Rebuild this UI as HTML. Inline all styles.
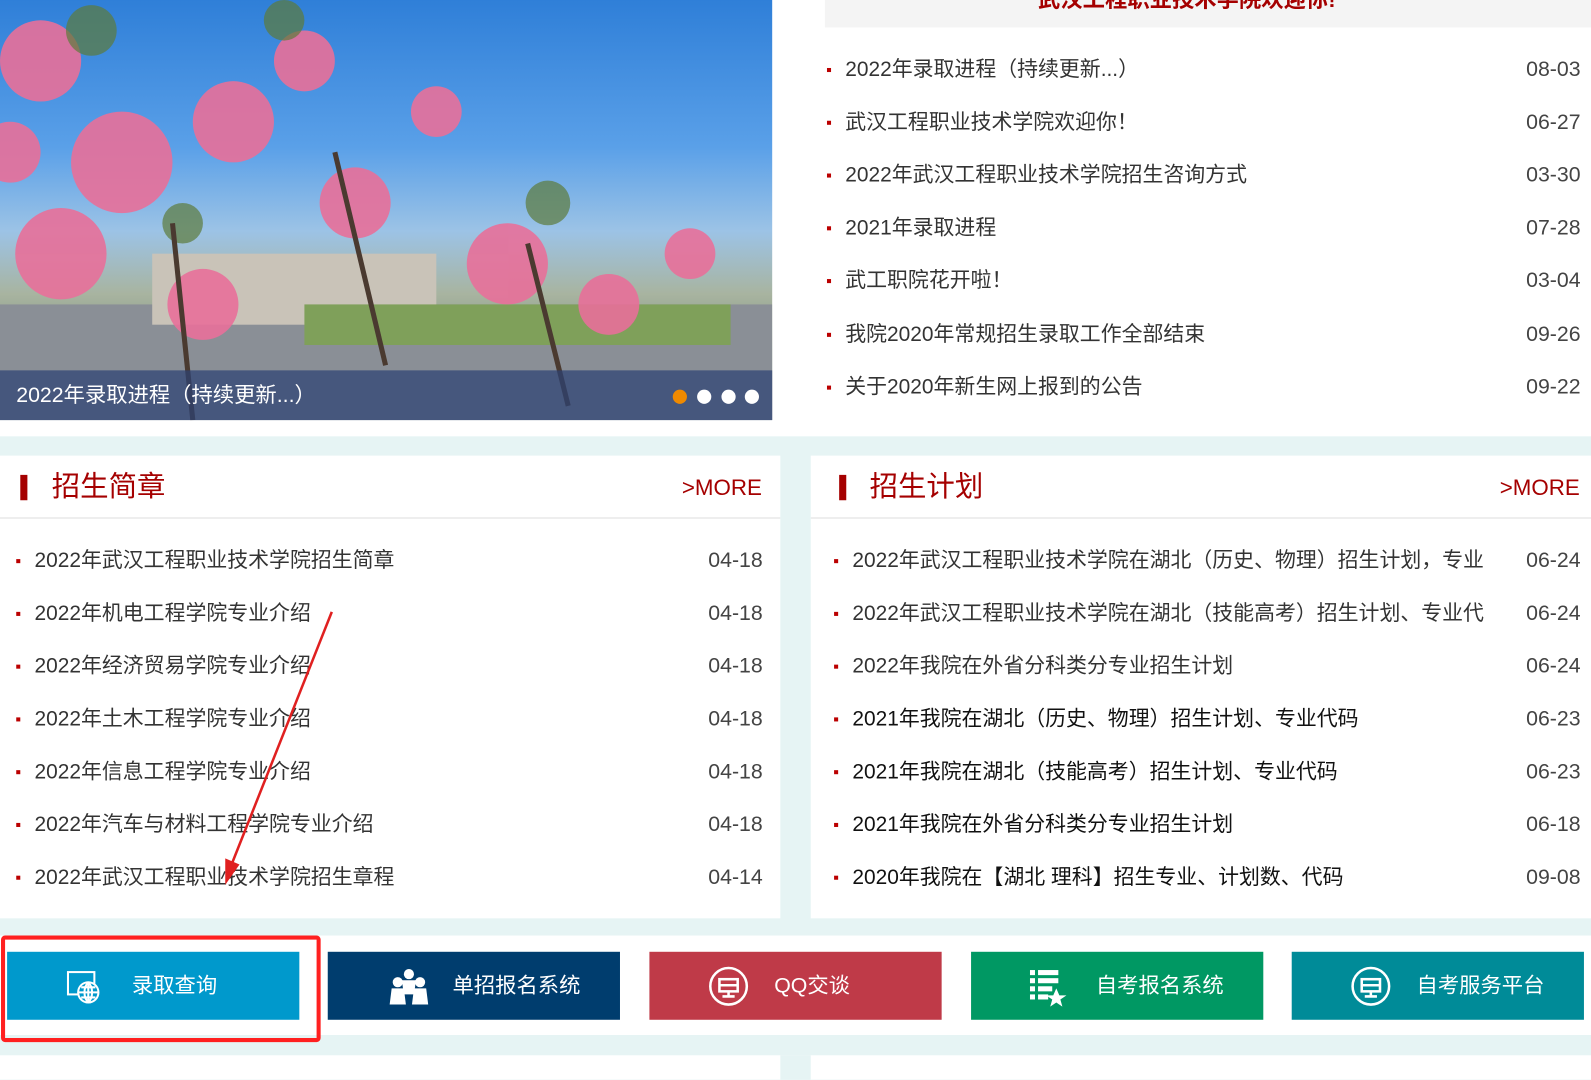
<!DOCTYPE html>
<html><head><meta charset="utf-8"><style>
*{margin:0;padding:0;box-sizing:border-box}
body{width:1591px;height:1064px;overflow:hidden;background:#e6f4f4;font-family:"Liberation Sans","Noto Sans CJK SC",sans-serif;position:relative}
#w{position:absolute;left:0;top:0;width:1568px;height:1049px;transform:scale(1.0147);transform-origin:0 0}
.abs{position:absolute}
.top{left:0;top:0;width:1591px;height:430px;background:#fff}
.img{left:0;top:0;width:761px;height:414px;overflow:hidden;background:linear-gradient(180deg,#2f7fd8 0%,#5aa0e8 35%,#9cc3e6 55%,#a8b4a0 70%,#7f8f80 85%,#8d96a2 100%)}
.cap{left:0;top:365px;width:761px;height:49px;background:rgba(45,65,115,.72);color:#fff;font-size:21px;line-height:49px;padding-left:16px}
.dot{top:384px;width:14px;height:14px;border-radius:50%;background:#fff}
.row{position:absolute;font-size:20.6px;color:#333;height:30px;line-height:30px;white-space:nowrap}
.row:before{content:"";position:absolute;left:-18px;top:13px;width:4px;height:4px;background:#b00}
.date{position:absolute;font-size:21px;color:#444;line-height:30px}
.panel{background:#fff;top:449px;height:456px}
.hd{position:absolute;left:0;right:0;top:0;height:62px;border-bottom:1px solid #ddd}
.bar{position:absolute;left:20px;top:19px;width:7px;height:25px;background:#a50000}
.ttl{position:absolute;left:51px;top:12px;font-size:28px;color:#a50000;line-height:38px}
.more{position:absolute;top:18px;font-size:22px;color:#a50000;line-height:28px}
.strip{left:0;top:922px;width:1591px;height:98px;background:#fff}
.btn{top:938px;width:288px;height:67px;color:#fff;font-size:21px;line-height:67px}
.btn span{position:absolute;left:123px}
.btn svg{position:absolute;left:58px;top:16px}
</style></head><body><div id="w">
<div class="abs top"></div>
<div class="abs img">
<svg width="761" height="414" class="abs" style="left:0;top:0">
<rect x="0" y="300" width="761" height="114" fill="#8a8f96"/>
<rect x="150" y="250" width="280" height="70" fill="#c9c3b8"/>
<rect x="300" y="300" width="420" height="40" fill="#7fa05a"/>
<g fill="#e8709a" opacity=".9">
<circle cx="40" cy="60" r="40"/><circle cx="120" cy="160" r="50"/><circle cx="60" cy="250" r="45"/><circle cx="230" cy="120" r="40"/><circle cx="300" cy="60" r="30"/><circle cx="350" cy="200" r="35"/><circle cx="200" cy="300" r="35"/><circle cx="430" cy="110" r="25"/><circle cx="500" cy="260" r="40"/><circle cx="600" cy="300" r="30"/><circle cx="680" cy="250" r="25"/><circle cx="10" cy="150" r="30"/>
</g>
<g fill="#5c7a3a" opacity=".7"><circle cx="90" cy="30" r="25"/><circle cx="280" cy="20" r="20"/><circle cx="180" cy="220" r="20"/><circle cx="540" cy="200" r="22"/></g>
<g stroke="#4a3a30" stroke-width="5"><line x1="190" y1="414" x2="170" y2="220"/><line x1="380" y1="360" x2="330" y2="150"/><line x1="560" y1="400" x2="520" y2="240"/></g>
</svg>
</div>
<div class="abs cap">2022年录取进程（持续更新...）</div>
<div class="abs dot" style="left:663px;background:#f08a00"></div>
<div class="abs dot" style="left:687px"></div>
<div class="abs dot" style="left:711px"></div>
<div class="abs dot" style="left:734px"></div>

<div class="abs" style="left:813px;top:0;width:755px;height:27px;background:#f4f4f4;overflow:hidden"><div style="position:absolute;left:210px;top:-18px;font-size:22px;font-weight:bold;color:#a50000">武汉工程职业技术学院欢迎你!</div></div>

<div class="row" style="left:833px;top:54px">2022年录取进程（持续更新...）</div><div class="date" style="left:1504px;top:54px">08-03</div>
<div class="row" style="left:833px;top:106px">武汉工程职业技术学院欢迎你！</div><div class="date" style="left:1504px;top:106px">06-27</div>
<div class="row" style="left:833px;top:158px">2022年武汉工程职业技术学院招生咨询方式</div><div class="date" style="left:1504px;top:158px">03-30</div>
<div class="row" style="left:833px;top:210px">2021年录取进程</div><div class="date" style="left:1504px;top:210px">07-28</div>
<div class="row" style="left:833px;top:262px">武工职院花开啦！</div><div class="date" style="left:1504px;top:262px">03-04</div>
<div class="row" style="left:833px;top:315px">我院2020年常规招生录取工作全部结束</div><div class="date" style="left:1504px;top:315px">09-26</div>
<div class="row" style="left:833px;top:367px">关于2020年新生网上报到的公告</div><div class="date" style="left:1504px;top:367px">09-22</div>

<div class="abs panel" style="left:0;width:769px"><div class="hd"><div class="bar"></div><div class="ttl">招生简章</div><div class="more" style="left:672px">&gt;MORE</div></div></div>
<div class="abs panel" style="left:799px;width:769px"><div class="hd"><div class="bar" style="left:28px"></div><div class="ttl" style="left:58px">招生计划</div><div class="more" style="left:679px">&gt;MORE</div></div></div>

<div class="row" style="left:34px;top:538px">2022年武汉工程职业技术学院招生简章</div><div class="date" style="left:698px;top:538px">04-18</div>
<div class="row" style="left:34px;top:590px">2022年机电工程学院专业介绍</div><div class="date" style="left:698px;top:590px">04-18</div>
<div class="row" style="left:34px;top:642px">2022年经济贸易学院专业介绍</div><div class="date" style="left:698px;top:642px">04-18</div>
<div class="row" style="left:34px;top:694px">2022年土木工程学院专业介绍</div><div class="date" style="left:698px;top:694px">04-18</div>
<div class="row" style="left:34px;top:746px">2022年信息工程学院专业介绍</div><div class="date" style="left:698px;top:746px">04-18</div>
<div class="row" style="left:34px;top:798px">2022年汽车与材料工程学院专业介绍</div><div class="date" style="left:698px;top:798px">04-18</div>
<div class="row" style="left:34px;top:850px">2022年武汉工程职业技术学院招生章程</div><div class="date" style="left:698px;top:850px">04-14</div>

<div class="row" style="left:840px;top:538px">2022年武汉工程职业技术学院在湖北（历史、物理）招生计划，专业</div><div class="date" style="left:1504px;top:538px">06-24</div>
<div class="row" style="left:840px;top:590px">2022年武汉工程职业技术学院在湖北（技能高考）招生计划、专业代</div><div class="date" style="left:1504px;top:590px">06-24</div>
<div class="row" style="left:840px;top:642px">2022年我院在外省分科类分专业招生计划</div><div class="date" style="left:1504px;top:642px">06-24</div>
<div class="row" style="left:840px;top:694px;color:#111">2021年我院在湖北（历史、物理）招生计划、专业代码</div><div class="date" style="left:1504px;top:694px">06-23</div>
<div class="row" style="left:840px;top:746px;color:#111">2021年我院在湖北（技能高考）招生计划、专业代码</div><div class="date" style="left:1504px;top:746px">06-23</div>
<div class="row" style="left:840px;top:798px;color:#111">2021年我院在外省分科类分专业招生计划</div><div class="date" style="left:1504px;top:798px">06-18</div>
<div class="row" style="left:840px;top:850px;color:#111">2020年我院在【湖北 理科】招生专业、计划数、代码</div><div class="date" style="left:1504px;top:850px">09-08</div>

<svg class="abs" style="left:0;top:0" width="1591" height="1064"><line x1="327" y1="603" x2="229" y2="850" stroke="#e02020" stroke-width="2.5"/><polygon points="222,872 222,846 236,852" fill="#e02020"/></svg>

<div class="abs strip"></div>
<div class="abs btn" style="left:7px;background:#0099cc"><svg width="36" height="36" viewBox="0 0 36 36" fill="none" stroke="#fff" stroke-width="2"><rect x="2" y="4" width="26" height="22"/><circle cx="22" cy="24" r="10" fill="#0099cc"/><path d="M12 24h20M22 14v20M15 19h14M15 29h14M22 14c-5 5-5 15 0 20M22 14c5 5 5 15 0 20"/></svg><span>录取查询</span></div>
<div class="abs btn" style="left:323px;background:#003d6e"><svg width="44" height="36" viewBox="0 0 44 36" fill="#fff"><circle cx="22" cy="6" r="5"/><path d="M15 12h14l-2 14h-10z"/><circle cx="11" cy="14" r="5"/><path d="M3 36l2-16h12l2 16z"/><circle cx="33" cy="14" r="5"/><path d="M25 36l2-16h12l2 16z"/></svg><span>单招报名系统</span></div>
<div class="abs btn" style="left:640px;background:#bf3a48"><svg width="40" height="40" viewBox="0 0 40 40" fill="none" stroke="#fff" stroke-width="2.5" style="top:14px"><circle cx="20" cy="20" r="18"/><rect x="11" y="13" width="18" height="12"/><path d="M11 19h18M20 25v5M14 30h12"/></svg><span>QQ交谈</span></div>
<div class="abs btn" style="left:957px;background:#009863"><svg width="36" height="38" viewBox="0 0 36 38" fill="#fff"><rect x="0" y="2" width="5" height="5"/><rect x="8" y="2" width="20" height="5"/><rect x="0" y="10" width="5" height="5"/><rect x="8" y="10" width="20" height="5"/><rect x="0" y="18" width="5" height="5"/><rect x="8" y="18" width="14" height="5"/><rect x="0" y="26" width="5" height="5"/><rect x="8" y="26" width="10" height="5"/><polygon points="26,20 29,27 36,27 30,31 32,38 26,34 20,38 22,31 16,27 23,27"/></svg><span>自考报名系统</span></div>
<div class="abs btn" style="left:1273px;background:#008b98"><svg width="40" height="40" viewBox="0 0 40 40" fill="none" stroke="#fff" stroke-width="2.5" style="top:14px"><circle cx="20" cy="20" r="18"/><rect x="11" y="13" width="18" height="12"/><path d="M11 19h18M20 25v5M14 30h12"/></svg><span>自考服务平台</span></div>
<div class="abs" style="left:1px;top:922px;width:315px;height:105px;border:4px solid #ff2020;border-radius:4px"></div>
<div class="abs" style="left:0;top:1040px;width:1568px;height:24px;background:#fff"></div>
<div class="abs" style="left:769px;top:1040px;width:30px;height:24px;background:#e6f4f4"></div>
</div></body></html>
